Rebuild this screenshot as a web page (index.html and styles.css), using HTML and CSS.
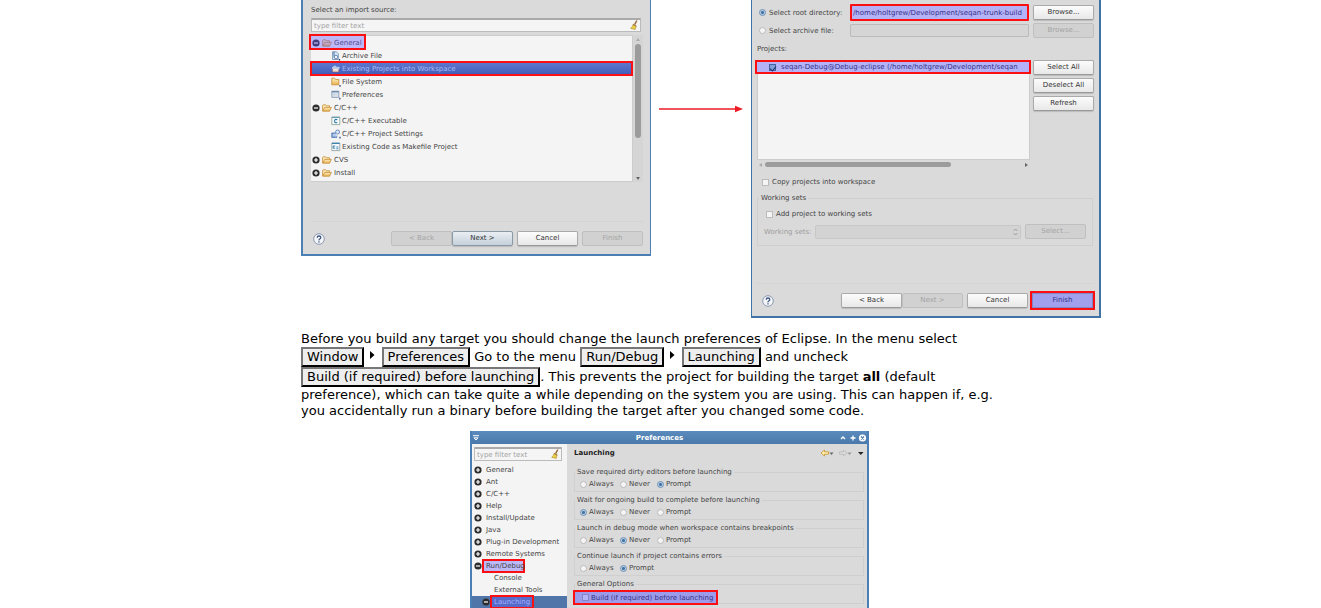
FILE: index.html
```html
<!DOCTYPE html>
<html lang="en">
<head>
<meta charset="utf-8">
<title>Importing the project into Eclipse</title>
<link rel="stylesheet" href="styles.css">
</head>
<body>
<svg class="defs" aria-hidden="true">
  <defs>
    <linearGradient id="gold" x1="0" y1="0" x2="0" y2="1"><stop offset="0" stop-color="#fff3c4"/><stop offset="1" stop-color="#e9b04c"/></linearGradient>
    <symbol id="minus" viewBox="0 0 8 8"><circle cx="4" cy="4" r="3.6" fill="#2c2c2c"/><path d="M2 4h4" stroke="#fff" stroke-width="1.2"/></symbol>
    <symbol id="plus" viewBox="0 0 8 8"><circle cx="4" cy="4" r="3.6" fill="#2c2c2c"/><path d="M2 4h4M4 2v4" stroke="#fff" stroke-width="1.2"/></symbol>
    <symbol id="folder" viewBox="0 0 10 8"><path d="M.6 7V1.6L1.2.8h2.4l.8 1h3.2v1.4" fill="#fdebb5" stroke="#c58a35" stroke-width=".8"/><path d="M.7 7.2L2.7 3.4h6.7L7.5 7.2z" fill="url(#gold)" stroke="#c58a35" stroke-width=".8"/></symbol>
    <symbol id="archive" viewBox="0 0 10 10"><path d="M1.5.8h4l1.8 1.9v5.8H1.5z" fill="#dbe8f6" stroke="#6f8fb2" stroke-width=".8"/><path d="M3 .8v4.4l1 1.8" fill="none" stroke="#476fa0"/><circle cx="5" cy="6" r="1.8" fill="#f4f7fb" stroke="#476fa0" stroke-width=".8"/><path d="M8.5 8v1.6" stroke="#253d70" stroke-width="1.2"/></symbol>
    <symbol id="project" viewBox="0 0 10 10"><path d="M1.4 4.2h6.4V8H1.4z" fill="#f3dfcd" stroke="#8a5976" stroke-width=".7"/><path d="M1 4.2l1.8-2h2l.6 1h3L7.8 5z" fill="#a8c7f0" stroke="#d9e6fa" stroke-width=".6"/></symbol>
    <symbol id="closed" viewBox="0 0 10 10"><path d="M.8 7.8V1.2h2.8l.8 1.3h3.4v5.3z" fill="url(#gold)" stroke="#c58a35" stroke-width=".8"/><path d="M9 8v1.8" stroke="#253d70" stroke-width="1.2"/></symbol>
    <symbol id="prefs" viewBox="0 0 10 10"><path d="M.8 1.2h7v6.2h-7z" fill="#dde5ee" stroke="#8093ad" stroke-width=".8"/><path d="M.8 1.8h7" stroke="#6582a9" stroke-width="1.2"/><path d="M3 2.4v5M.8 4.6h7" stroke="#bdc9d8" stroke-width=".5"/><path d="M8.8 7.8v1.8" stroke="#253d70" stroke-width="1.2"/></symbol>
    <symbol id="cfile" viewBox="0 0 10 10"><path d="M.8 1h8v7.6h-8z" fill="#f6fafe" stroke="#879f8e" stroke-width=".8"/><path d="M1 1.4h7.6" stroke="#5d96b8"/><path d="M6.3 3.8Q3.7 2.6 3.6 5T6.3 6.4" fill="none" stroke="#2676a3" stroke-width="1.1"/></symbol>
    <symbol id="csettings" viewBox="0 0 10 10"><path d="M.8 4h5v4.4h-5z" fill="#8fb1df" stroke="#426bab" stroke-width=".8"/><circle cx="6.6" cy="3" r="2" fill="#dce8f6" stroke="#6384b7" stroke-width=".9"/><path d="M2 6h4.5M4.7 4.5L6.5 6 4.7 7.5" fill="none" stroke="#eef5ff" stroke-width=".8"/><path d="M9 7.8v1.8" stroke="#253d70" stroke-width="1.2"/></symbol>
    <symbol id="makefile" viewBox="0 0 10 10"><path d="M.8 1h8v7.6h-8z" fill="#f6fafe" stroke="#8d9999" stroke-width=".8"/><path d="M1 1.4h7.6" stroke="#3a83b4" stroke-width="1.2"/><path d="M2.2 4h2M2.2 4v2.2h2M5.4 5h2M5.4 6.8h2" fill="none" stroke="#2676a3" stroke-width=".9"/></symbol>
    <symbol id="broom" viewBox="0 0 8 10"><path d="M6.8.5L4.6 4.6" stroke="#9b6b3a" stroke-width="1.5"/><path d="M3.2 4.2l3 1.6-1 3.6L.7 8.4q1.8-1.6 2.5-4.2z" fill="#ead148" stroke="#ae8a23" stroke-width=".6"/><path d="M3 4.4l3.2 1.8" stroke="#8e6750" stroke-width=".9"/></symbol>
    <symbol id="help" viewBox="0 0 12 12"><circle cx="6" cy="6" r="5.3" fill="#f3f5f8" stroke="#7585a1" stroke-width=".8"/><path d="M4.2 4.8Q4.2 3 6 3t1.8 1.6Q7.8 5.4 6.8 6T6 7.4M6 8.3v1.3" fill="none" stroke="#3e5681" stroke-width="1.3"/></symbol>
  </defs>
</svg>
<main class="content">
  <div class="figure">
    <section class="dialog import">
      <label class="caption" for="filter">Select an import source:</label>
      <div class="filter"><input id="filter" type="text" placeholder="type filter text"><svg class="broom"><use href="#broom"/></svg></div>
      <div class="list">
        <ul class="tree">
          <li><svg class="knob"><use href="#minus"/></svg><svg class="fold"><use href="#folder"/></svg>General<span class="mark mark-general"></span></li>
          <li class="child"><svg class="icon"><use href="#archive"/></svg>Archive File</li>
          <li class="child selected"><svg class="icon"><use href="#project"/></svg>Existing Projects into Workspace</li>
          <li class="child"><svg class="icon"><use href="#closed"/></svg>File System</li>
          <li class="child"><svg class="icon"><use href="#prefs"/></svg>Preferences</li>
          <li><svg class="knob"><use href="#minus"/></svg><svg class="fold"><use href="#folder"/></svg>C/C++</li>
          <li class="child"><svg class="icon"><use href="#cfile"/></svg>C/C++ Executable</li>
          <li class="child"><svg class="icon"><use href="#csettings"/></svg>C/C++ Project Settings</li>
          <li class="child"><svg class="icon"><use href="#makefile"/></svg>Existing Code as Makefile Project</li>
          <li><svg class="knob"><use href="#plus"/></svg><svg class="fold"><use href="#folder"/></svg>CVS</li>
          <li><svg class="knob"><use href="#plus"/></svg><svg class="fold"><use href="#folder"/></svg>Install</li>
        </ul>
        <div class="vscroll"><i class="up"></i><i class="thumb"></i><i class="down"></i></div>
      </div>
      <div class="actions">
        <svg class="help"><use href="#help"/></svg>
        <button class="btn" disabled>&lt; Back</button><button class="btn focus">Next &gt;</button><button class="btn apart">Cancel</button><button class="btn apart" disabled>Finish</button>
      </div>
    </section>

    <svg class="arrow" viewBox="0 0 100 10"><path d="M8 5h78" stroke="#ed1c24" stroke-width="1.6"/><path d="M84 1.8L92 5l-8 3.2z" fill="#ed1c24"/></svg>

    <section class="dialog projects">
      <div class="source">
        <input class="radio" type="radio" name="source" id="root" checked><label for="root">Select root directory:</label>
        <input class="path marked" type="text" aria-label="Root directory" value="/home/holtgrew/Development/seqan-trunk-build"><button class="btn">Browse...</button>
        <input class="radio" type="radio" name="source" id="archive-file"><label for="archive-file">Select archive file:</label>
        <input class="path" type="text" aria-label="Archive file" disabled><button class="btn" disabled>Browse...</button>
      </div>
      <div class="caption">Projects:</div>
      <div class="chooser">
        <div class="found">
          <div class="files"><label class="project"><input class="check" type="checkbox" checked><span>seqan-Debug@Debug-eclipse (/home/holtgrew/Development/seqan</span></label></div>
          <div class="hscroll"><i class="left"></i><i class="thumb"></i><i class="right"></i></div>
        </div>
        <div class="stack"><button class="btn">Select All</button><button class="btn">Deselect All</button><button class="btn">Refresh</button></div>
      </div>
      <label class="copy"><input class="check" type="checkbox">Copy projects into workspace</label>
      <fieldset class="sets">
        <legend>Working sets</legend>
        <label class="add"><input class="check" type="checkbox">Add project to working sets</label>
        <div class="setrow"><label for="sets">Working sets:</label><span class="combo"><select id="sets" disabled><option></option></select><svg viewBox="0 0 5 8"><path d="M.8 2.8L2.5 1l1.7 1.8M.8 5.2L2.5 7l1.7-1.8" fill="none" stroke="#999"/></svg></span><button class="btn" disabled>Select...</button></div>
      </fieldset>
      <div class="actions">
        <svg class="help"><use href="#help"/></svg>
        <button class="btn">&lt; Back</button><button class="btn" disabled>Next &gt;</button><button class="btn apart">Cancel</button><button class="btn apart finish">Finish</button>
      </div>
    </section>
  </div>

  <p class="text">Before you build any target you should change the launch preferences of Eclipse. In the menu select <span class="menu">Window</span> <svg class="sep" viewBox="0 0 5 8"><path d="M0 0l4.5 4L0 8z"/></svg> <span class="menu">Preferences</span> Go to the menu <span class="menu">Run/Debug</span> <svg class="sep" viewBox="0 0 5 8"><path d="M0 0l4.5 4L0 8z"/></svg> <span class="menu">Launching</span> and uncheck <span class="menu">Build (if required) before launching</span>. This prevents the project for building the target <strong>all</strong> (default preference), which can take quite a while depending on the system you are using. This can happen if, e.g. you accidentally run a binary before building the target after you changed some code.</p>

  <section class="preferences">
    <header class="titlebar">
      <svg class="tmenu" viewBox="0 0 6 6"><path d="M0 .7h6M1 2.8h4L3 5z" stroke="#fff" fill="none"/></svg>
      <span>Preferences</span>
      <svg class="tools" viewBox="0 0 28 8"><path d="M2 5l2-2 2 2M11.5 4h5M14 1.5v5" stroke="#fff" stroke-width="1.3" fill="none"/><circle cx="23.5" cy="4" r="3.6" fill="#fff"/><path d="M22 2.5l3 3m0-3l-3 3" stroke="#4a79aa" stroke-width="1.1"/></svg>
    </header>
    <div class="panes">
      <nav class="side">
        <div class="filter"><input type="text" aria-label="Filter" placeholder="type filter text"><svg class="broom"><use href="#broom"/></svg></div>
        <ul>
          <li><svg class="knob"><use href="#plus"/></svg>General</li>
          <li><svg class="knob"><use href="#plus"/></svg>Ant</li>
          <li><svg class="knob"><use href="#plus"/></svg>C/C++</li>
          <li><svg class="knob"><use href="#plus"/></svg>Help</li>
          <li><svg class="knob"><use href="#plus"/></svg>Install/Update</li>
          <li><svg class="knob"><use href="#plus"/></svg>Java</li>
          <li><svg class="knob"><use href="#plus"/></svg>Plug-in Development</li>
          <li><svg class="knob"><use href="#plus"/></svg>Remote Systems</li>
          <li><svg class="knob"><use href="#minus"/></svg>Run/Debug<span class="mark mark-run"></span></li>
          <li class="leaf">Console</li>
          <li class="leaf">External Tools</li>
          <li class="current"><svg class="knob"><use href="#minus"/></svg>Launching<span class="mark mark-launch"></span></li>
        </ul>
      </nav>
      <div class="page">
        <div class="heading"><h2>Launching</h2><svg class="history" viewBox="0 0 44 8"><path d="M1 4l3.5-3v1.8h4v2.4h-4V7z" fill="#fff1b8" stroke="#c99a35" stroke-width=".9"/><path d="M9.5 3.5h4l-2 2.5z" fill="#666"/><path d="M27 4l-3.5-3v1.8h-4v2.4h4V7z" fill="#ddd" stroke="#bbb" stroke-width=".9"/><path d="M27.5 3.5h4l-2 2.5z" fill="#999"/><path d="M38 3h5.5l-2.7 3z" fill="#222"/></svg></div>
        <fieldset class="group"><legend>Save required dirty editors before launching</legend>
          <label><input class="radio" type="radio" name="save">Always</label><label><input class="radio" type="radio" name="save">Never</label><label><input class="radio" type="radio" name="save" checked>Prompt</label></fieldset>
        <fieldset class="group"><legend>Wait for ongoing build to complete before launching</legend>
          <label><input class="radio" type="radio" name="wait" checked>Always</label><label><input class="radio" type="radio" name="wait">Never</label><label><input class="radio" type="radio" name="wait">Prompt</label></fieldset>
        <fieldset class="group"><legend>Launch in debug mode when workspace contains breakpoints</legend>
          <label><input class="radio" type="radio" name="debug">Always</label><label><input class="radio" type="radio" name="debug" checked>Never</label><label><input class="radio" type="radio" name="debug">Prompt</label></fieldset>
        <fieldset class="group"><legend>Continue launch if project contains errors</legend>
          <label><input class="radio" type="radio" name="errors">Always</label><label><input class="radio" type="radio" name="errors" checked>Prompt</label></fieldset>
        <fieldset class="group"><legend>General Options</legend>
          <label class="build"><input class="check" type="checkbox">Build (if required) before launching</label></fieldset>
      </div>
    </div>
  </section>
</main>
</body>
</html>
```
FILE: styles.css
```css
* { box-sizing: border-box; }
html, body { height: 100%; }
body { margin: 0; background: #fff; overflow: hidden; }
input, button, select { font: inherit; color: inherit; margin: 0; }
ul { list-style: none; margin: 0; padding: 0; }
svg { flex: none; }
.defs { position: absolute; width: 0; height: 0; }

.content { margin: 0 283px 0 301px; }
.figure { display: flex; align-items: flex-start; }
.dialog, .preferences {
  font-family: "DejaVu Sans", Verdana, sans-serif;
  font-size: 7px;
  line-height: 12px;
  color: #444;
  background: #dadada;
}
.dialog { flex: none; width: 350px; border: 1px solid #4c7fb5; border-width: 0 1px 2px 2px; padding: 0 7px 8px 8px; }
.dialog.projects { padding: 5px 5px 8px 4px; border-width: 0 2px 2px 1px; border-color: #3f72a5; }
.arrow { width: 100px; height: 10px; margin-top: 104px; }
.caption { display: block; }
.import .caption { padding-top: 4px; height: 18px; }

.filter { position: relative; }
.import .filter { margin-right: 2px; }
.filter input { display: block; width: 100%; height: 14px; border: 1px solid #bbb; border-top: 2px solid #aaa; border-radius: 1px; background: #f5f5f5; padding: 0 2px; outline: 0; }
.filter input::placeholder { color: #a3a3a3; opacity: 1; }
.broom { position: absolute; right: 3px; top: 2px; width: 8px; height: 10px; }

.list { display: flex; margin-top: 3px; height: 147px; }
.tree { flex: 1; background: #f4f4f4; border: 1px solid #ccc; border-width: 1px 1px 1px 0; }
.tree li { position: relative; display: flex; align-items: center; height: 13px; padding-left: 1px; white-space: nowrap; }
.tree .child { padding-left: 20px; }
.knob { width: 8px; height: 8px; margin-right: 2px; }
.fold { width: 10px; height: 8px; margin-right: 2px; }
.icon { width: 10px; height: 10px; margin-right: 1px; }
.tree .selected { background: linear-gradient(#6179cf, #3f5cb8); color: #a9b9f2; outline: 2px solid #fb0f12; outline-offset: -1px; }
.mark { position: absolute; border: 2px solid #fb0f12; background: rgba(100, 90, 255, .38); }
.mark-general { left: -2px; top: -2px; width: 57px; height: 16px; }
.vscroll { width: 10px; display: flex; flex-direction: column; align-items: center; background: #d5d5d5; padding: 3px 0 2px; }
.vscroll .thumb { width: 6px; height: 94px; margin: 3px 0 auto; background: #9c9c9c; border-radius: 3px; }
.up, .down { border: 2px solid transparent; border-bottom: 3px solid #aaa; border-top: 0; }
.down { border-bottom: 0; border-top: 3px solid #666; }

.actions { display: flex; align-items: center; }
.import .actions { margin-top: 39px; padding-top: 9px; border-top: 1px solid #d3d3d3; }
.help { width: 12px; height: 12px; margin: 0 auto 0 2px; }
.btn { width: 61px; height: 15px; padding: 0; line-height: 11px; border: 1px solid #aaa; border-bottom-color: #999; border-radius: 2px; background: linear-gradient(#fcfcfc, #e8e8e8); color: #333; box-shadow: 0 1px 1px #bbb; }
.btn:disabled { background: #d1d1d1; border-color: #bfbfbf; color: #a4a4a4; box-shadow: none; }
.btn.focus { background: linear-gradient(#e9eef3, #c5d0da); border-color: #8b98a5; }
.btn.apart { margin-left: 4px; }
.btn.finish { background: #a0a0ed; color: #343188; outline: 2px solid #fb0f12; border-color: #8585c5; border-radius: 0; }

.radio, .check { appearance: none; flex: none; width: 7px; height: 7px; background: #f5f5f5; border: 1px solid #bbb; }
.radio { border-radius: 50%; }
.radio:checked { background: radial-gradient(circle, #45709c 0 1px, #b3cfe9 2px); border-color: #6e92b7; }
.source { display: grid; grid-template-columns: 7px 76px 1fr 61px; column-gap: 4px; row-gap: 3px; align-items: center; padding-left: 3px; }
.source label { margin-left: -1px; white-space: nowrap; }
.path { width: 100%; min-width: 0; height: 13px; border: 1px solid #bbb; border-radius: 1px; background: #d5d5d5; padding: 0 1px; }
.path.marked { height: 17px; margin: -1px 0; border: 2px solid #fb0f12; background: #b4b3f8; color: #343188; }
.projects > .caption { margin: 5px 0 5px 1px; }
.chooser { display: flex; gap: 3px; }
.found { flex: 1; min-width: 0; padding-left: 1px; }
.files { height: 100px; background: #f4f4f4; border: 1px solid #ccc; }
.project { display: flex; align-items: center; height: 14px; margin: -1px -2px 0 -3px; padding-left: 12px; border: 2px solid #fb0f12; background: #b4b3f8; color: #343188; white-space: nowrap; }
.project span { overflow: hidden; }
.project .check { display: flex; justify-content: center; margin-right: 5px; background: #7f9fdb; border-color: #4563a4; }
.project .check::after { content: ""; width: 3px; height: 5px; border: solid #1f2f66; border-width: 0 1px 1px 0; transform: rotate(40deg); }
.hscroll { display: flex; align-items: center; height: 9px; padding: 0 2px; }
.hscroll .thumb { width: 69%; height: 5px; margin: 0 auto 0 3px; border-radius: 3px; background: #9c9c9c; }
.left, .right { border: 2px solid transparent; border-right: 3px solid #aaa; border-left: 0; }
.right { border-right: 0; border-left: 3px solid #666; }
.stack { display: flex; flex-direction: column; gap: 3px; }
.copy, .add { display: flex; align-items: center; gap: 3px; }
.copy { margin: 7px 0 4px 6px; }
.sets { margin: 0 1px 0 1px; padding: 4px 6px 6px; border: 1px solid #cfcfcf; min-width: 0; }
legend { padding: 0 2px; }
.sets legend { margin-left: -5px; }
.add { margin-left: 2px; }
.setrow { display: flex; align-items: center; gap: 4px; margin-top: 4px; color: #9d9d9d; }
.combo { position: relative; display: flex; flex: 1; }
.combo select { appearance: none; width: 100%; height: 14px; border: 1px solid #bfbfbf; border-radius: 2px; background: #d1d1d1; }
.combo svg { position: absolute; right: 3px; top: 3px; width: 5px; height: 8px; }
.projects .actions { margin-top: 37px; padding-top: 9px; border-top: 1px solid #d5d5d5; }
.projects .actions .btn:last-child { margin-right: 1px; }
.projects .help { margin-left: 6px; }

.text { max-width: 716px; margin: 13px 0 12px; font: 13px/16px "DejaVu Sans", Verdana, sans-serif; color: #000; }
.menu { display: inline-block; height: 20px; line-height: 16px; padding: 0 4px; border: 2px solid #000; border-top-color: #777; border-left-color: #777; background: #eee; white-space: nowrap; }
.sep { width: 5px; height: 8px; margin: 0 2px 2px; }

.preferences { width: 399px; margin: 0 auto; border: 1px solid #4c7fb5; border-width: 0 2px; }
.titlebar { display: grid; grid-template-columns: 8px 1fr 28px; align-items: center; height: 13px; background: linear-gradient(#5a8cbd, #4a79aa); color: #fff; text-align: center; font-weight: bold; }
.tmenu { width: 6px; height: 6px; margin-left: 1px; }
.tools { width: 28px; height: 8px; }
.panes { display: flex; }
.side { width: 95px; background: #f4f4f4; }
.side .filter { margin: 3px 5px 3px 2px; }
.side li { position: relative; isolation: isolate; display: flex; align-items: center; height: 12px; padding-left: 2px; white-space: nowrap; }
.side .knob { margin-right: 4px; }
.side .leaf { padding-left: 22px; }
.side .current { padding-left: 10px; background: #5076a9; color: #a3b0ff; }
.side .mark { z-index: -1; }
.mark-run { left: 10px; top: -1px; width: 43px; height: 14px; }
.mark-launch { left: 18px; top: -1px; width: 44px; height: 14px; }
.page { flex: 1; min-width: 0; padding: 3px 3px 0 7px; }
.heading { display: flex; align-items: center; justify-content: space-between; height: 12px; margin-bottom: 7px; }
h2 { margin: 0; font-size: 7px; line-height: 12px; color: #222; }
.history { width: 44px; height: 8px; }
.group { display: grid; grid-template-columns: 40px 37px 1fr; align-items: center; height: 26px; margin: 0 0 2px; padding: 0 0 2px 5px; border: 1px solid #cfcfcf; min-width: 0; }
.group legend { margin-left: -5px; }
.group label { display: flex; align-items: center; gap: 2px; white-space: nowrap; }
.group .build { width: 145px; height: 15px; padding-left: 7px; margin-left: -7px; border: 2px solid #fb0f12; background: #9d9cea; color: #343188; }
.build .check { background: #b4b3f8; border-color: #8585c5; }
```
